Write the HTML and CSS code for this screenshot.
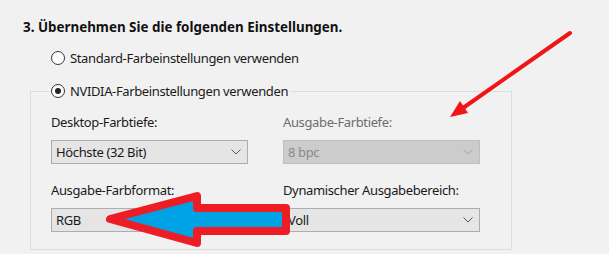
FILE: index.html
```html
<!DOCTYPE html>
<html>
<head>
  <title>NVIDIA Farbeinstellungen</title>
  <link rel="stylesheet" href="styles.css">
</head>
<body>
  <div class="page">
    <h2 class="step-title">3. Übernehmen Sie die folgenden Einstellungen.</h2>

    <label class="radio-row"><span class="radio"></span>Standard-Farbeinstellungen verwenden</label>

    <fieldset class="group">
      <legend class="radio-row"><span class="radio checked"></span>NVIDIA-Farbeinstellungen verwenden</legend>

      <div class="field-grid">
        <div class="field">
          <div class="field-label">Desktop-Farbtiefe:</div>
          <div class="dropdown">
            <span>Höchste (32 Bit)</span>
            <svg class="chevron" width="10" height="6" viewBox="0 0 10 6"><polyline points="0.5,0.5 5,5 9.5,0.5"/></svg>
          </div>
        </div>
        <div class="field">
          <div class="field-label disabled">Ausgabe-Farbtiefe:</div>
          <div class="dropdown disabled">
            <span>8 bpc</span>
            <svg class="chevron" width="10" height="6" viewBox="0 0 10 6"><polyline points="0.5,0.5 5,5 9.5,0.5"/></svg>
          </div>
        </div>
        <div class="field">
          <div class="field-label">Ausgabe-Farbformat:</div>
          <div class="dropdown">
            <span>RGB</span>
          </div>
        </div>
        <div class="field">
          <div class="field-label">Dynamischer Ausgabebereich:</div>
          <div class="dropdown">
            <span>Voll</span>
            <svg class="chevron" width="10" height="6" viewBox="0 0 10 6"><polyline points="0.5,0.5 5,5 9.5,0.5"/></svg>
          </div>
        </div>
      </div>
    </fieldset>

    <!-- annotation arrows drawn over the screenshot -->
    <svg class="annotations" width="609" height="254" viewBox="0 0 609 254">
      <line x1="570" y1="33" x2="463" y2="108" stroke="#f21515" stroke-width="4" stroke-linecap="round"/>
      <polygon points="450,117 468,113 460,101" fill="#f21515"/>
      <path d="M110,219 L197,196 L197,208 L286,208 L286,231 L197,231 L197,243 Z"
            fill="#00a2e6" stroke="#ee1c25" stroke-width="8" stroke-linejoin="round"/>
    </svg>
  </div>
</body>
</html>
```

FILE: styles.css
```css
body {
  margin: 0;
  background-color: #f1f1f1;
  font-family: 'Noto Sans', sans-serif;
  font-size: 13px;
  letter-spacing: -0.37px;
  color: #1a1a1a;
}

.page {
  position: relative;
  width: 609px;
  height: 254px;
  overflow: hidden;
  padding: 19px 0 0 23px;
  box-sizing: border-box;
}

.step-title {
  margin: 0;
  font-size: 13.4px;
  line-height: 17px;
  letter-spacing: 0;
  font-weight: bold;
  color: #111;
}

.radio-row {
  display: flex;
  align-items: center;
  gap: 5px;
  line-height: 16px;
  color: #1a1a1a;
}

label.radio-row {
  margin: 14px 0 0 28px;
}

.radio {
  width: 12px;
  height: 12px;
  border: 1px solid #333;
  border-radius: 50%;
  background: #fff;
  display: flex;
  align-items: center;
  justify-content: center;
}

.radio.checked::after {
  content: "";
  width: 6px;
  height: 6px;
  border-radius: 50%;
  background: #222;
}

.group {
  margin: 17px 0 0 7px;
  width: 482px;
  height: 167px;
  box-sizing: border-box;
  border: 1px solid #dcdcdc;
  padding: 0 31px 0 20px;
}

.group legend {
  padding: 0 2px;
  margin-left: -2px;
}

.field-grid {
  display: grid;
  grid-template-columns: 197px 197px;
  column-gap: 35px;
  row-gap: 18px;
  padding-top: 15px;
}

.field-label {
  line-height: 16px;
  margin-bottom: 10px;
}

.field-label.disabled {
  color: #6d6d6d;
}

.dropdown {
  height: 24px;
  box-sizing: border-box;
  border: 1px solid #adadad;
  background-color: #e5e5e5;
  display: flex;
  align-items: center;
  justify-content: space-between;
  padding: 0 6px 0 4px;
}

.dropdown.disabled {
  background-color: #cccccc;
  border-color: #bfbfbf;
  color: #8a8a8a;
}

.chevron polyline {
  fill: none;
  stroke: #555;
  stroke-width: 1;
}

.dropdown.disabled .chevron polyline {
  stroke: #a6a6a6;
}

.annotations {
  position: absolute;
  left: 0;
  top: 0;
  pointer-events: none;
}
```
